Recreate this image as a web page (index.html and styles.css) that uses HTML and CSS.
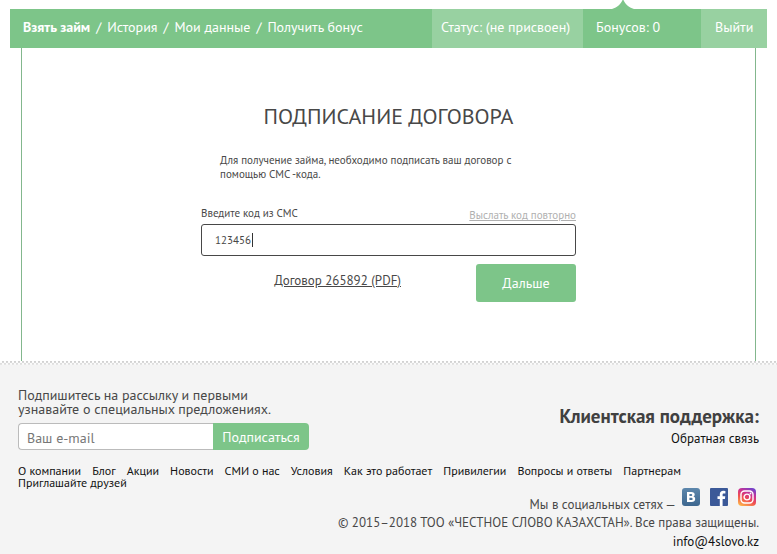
FILE: index.html
```html
<!DOCTYPE html>
<html lang="ru">
<head>
<meta charset="utf-8">
<meta name="viewport" content="width=device-width, initial-scale=1">
<title>Подписание договора</title>
<link rel="stylesheet" href="styles.css">
</head>
<body>
<header class="topbar">
  <nav class="topnav" aria-label="Личный кабинет">
    <a class="active" href="#">Взять займ</a><span>/</span><a href="#">История</a><span>/</span><a href="#">Мои данные</a><span>/</span><a href="#">Получить бонус</a>
  </nav>
  <div class="cell status">Статус: (не присвоен)</div>
  <div class="cell bonus">Бонусов: 0
    <svg class="pointer" viewBox="0 0 22 10" aria-hidden="true"><path d="M0 10C6 8 9 5 11 0C13 5 16 8 22 10Z" fill="#7dc589"/></svg>
  </div>
  <a class="cell logout" href="#">Выйти</a>
</header>
<main class="frame">
  <h1>ПОДПИСАНИЕ ДОГОВОРА</h1>
  <form class="sign">
    <p class="intro">Для получение займа, необходимо подписать ваш договор с помощью СМС -кода.</p>
    <div class="labels">
      <label for="code">Введите код из СМС</label>
      <a class="resend" href="#">Выслать код повторно</a>
    </div>
    <div class="codebox">
      <input id="code" class="code" type="text" value="123456">
      <span class="caret" aria-hidden="true"></span>
    </div>
    <div class="actions">
      <a class="contract" href="#">Договор 265892 (PDF)</a>
      <button class="next" type="button">Дальше</button>
    </div>
  </form>
</main>
<footer class="footer">
  <div class="footer-top">
    <form class="subscribe">
      <label for="email">Подпишитесь на рассылку и первыми<br>узнавайте о специальных предложениях.</label>
      <div class="subscribe-row">
        <input id="email" type="email" placeholder="Ваш e-mail">
        <button type="button">Подписаться</button>
      </div>
    </form>
    <div class="support">
      <h2>Клиентская поддержка:</h2>
      <a href="#">Обратная связь</a>
    </div>
  </div>
  <nav class="links" aria-label="Разделы сайта">
    <a href="#">О компании</a><a href="#">Блог</a><a href="#">Акции</a><a href="#">Новости</a><a href="#">СМИ о нас</a><a href="#">Условия</a><a href="#">Как это работает</a><a href="#">Привилегии</a><a href="#">Вопросы и ответы</a><a href="#">Партнерам</a><a href="#">Приглашайте друзей</a>
  </nav>
  <div class="social">
    <span>Мы в социальных сетях —</span>
    <a href="#" aria-label="ВКонтакте"><svg viewBox="0 0 18 18"><defs><linearGradient id="vk" x2="0" y2="1"><stop stop-color="#5d87ac"/><stop offset="1" stop-color="#3d678f"/></linearGradient></defs><rect width="18" height="18" rx="3" fill="url(#vk)"/><path fill="#fff" fill-rule="evenodd" d="M5 4H9.400C11.500 4 12.700 4.900 12.700 6.500C12.700 7.500 12.200 8.200 11.300 8.600C12.500 8.900 13.200 9.700 13.200 11C13.200 12.900 11.800 14 9.500 14H5ZM7.400 5.900V7.900H8.900C9.800 7.900 10.200 7.500 10.200 6.900C10.200 6.200 9.800 5.900 8.900 5.900ZM7.400 9.700V12.100H9.100C10.100 12.100 10.600 11.700 10.600 10.900C10.600 10.100 10.100 9.700 9.100 9.700Z"/></svg></a>
    <a href="#" aria-label="Facebook"><svg viewBox="0 0 18 18"><rect width="18" height="18" rx="1" fill="#3b5998"/><path fill="#fff" d="M9.800 18V11H7.500V8.300H9.800V6.300C9.800 4 11.200 2.800 13.300 2.800L15.400 2.900V5.400H13.900C12.800 5.400 12.600 5.900 12.600 6.700V8.300H15.300L14.900 11H12.600V18Z"/></svg></a>
    <a href="#" aria-label="Instagram"><svg viewBox="0 0 18 18"><defs><linearGradient id="ig" x1=".2" y1="1" x2=".7" y2="0"><stop stop-color="#fdb34b"/><stop offset=".4" stop-color="#f0504f"/><stop offset=".7" stop-color="#cb3192"/><stop offset="1" stop-color="#7642c8"/></linearGradient></defs><rect width="18" height="18" rx="4" fill="url(#ig)"/><g fill="none" stroke="#fff" stroke-width="1.400"><rect x="3" y="3" width="12" height="12" rx="3.500"/><circle cx="9" cy="9" r="2.900"/></g><circle cx="12.500" cy="5.500" r=".9" fill="#fff"/></svg></a>
  </div>
  <p class="copyright">© 2015–2018 ТОО «ЧЕСТНОЕ СЛОВО КАЗАХСТАН». Все права защищены.</p>
  <a class="mail" href="#">info@4slovo.kz</a>
</footer>
</body>
</html>
```
FILE: styles.css
```css
* {
  box-sizing: border-box;
}

body {
  margin: 0;
  min-height: 100vh;
  display: flex;
  flex-direction: column;
  background: #fff;
  color: #484848;
  font: 13px/14px "PT Sans", "Noto Sans", sans-serif;
}

a {
  color: inherit;
  text-decoration: none;
}

h1, h2, p {
  margin: 0;
  font-weight: normal;
}

input, button {
  font-family: inherit;
}

.topbar {
  display: flex;
  margin: 9px 10px 0;
  background: #7dc589;
  color: #fff;
  font-size: 14px;
  line-height: 36px;
}

.topnav {
  flex: 1;
  display: flex;
  gap: 6px;
  padding: 0 13px 3px;
  white-space: nowrap;
}

.active {
  font-weight: bold;
}

.cell {
  flex: none;
  padding-bottom: 3px;
  white-space: nowrap;
}

.status {
  width: 151px;
  padding-left: 9px;
  background: #98d1a1;
}

.bonus {
  position: relative;
  width: 118px;
  padding-left: 13px;
}

.pointer {
  position: absolute;
  left: 29px;
  bottom: 100%;
  width: 22px;
  height: 10px;
}

.logout {
  width: 66px;
  padding-left: 14px;
  background: #98d1a1;
}

.frame {
  margin: 0 21px;
  padding: 54px 20px 59px;
  border: solid #83b78d;
  border-width: 0 1px;
}

h1 {
  font-size: 22px;
  line-height: 28px;
  text-align: center;
}

.sign {
  max-width: 375px;
  margin: 23px auto 0;
}

.intro {
  padding: 0 39px 0 19px;
  font-size: 11px;
}

.labels {
  display: flex;
  justify-content: space-between;
  margin: 25px 0 2px;
  font-size: 11px;
}

.resend {
  padding-top: 2px;
  color: #b0b0b0;
  text-decoration: underline;
}

.codebox {
  position: relative;
}

.code {
  display: block;
  width: 100%;
  height: 32px;
  padding: 0 13px;
  border: 1px solid #484848;
  border-radius: 3px;
  color: #484848;
  font-size: 11px;
}

.caret {
  position: absolute;
  left: 51px;
  top: 9px;
  width: 1px;
  height: 14px;
  background: #333;
}

.actions {
  display: flex;
  justify-content: flex-end;
  margin-top: 8px;
}

.contract {
  margin: 10px 75px 0 0;
  text-decoration: underline;
}

.next {
  width: 100px;
  height: 38px;
  border: 0;
  border-radius: 3px;
  background: #7dc589;
  color: #fff;
  font-size: 14px;
  font-weight: 500;
}

/* The top edge is a thin woven strip that fades into the footer. */
.footer {
  flex: 1;
  padding: 27px 18px 0;
  background:
    linear-gradient(rgba(244, 244, 244, 0), #f4f4f4) 0 0 / 100% 6px no-repeat,
    repeating-conic-gradient(#cfcfcf 0 25%, #fff 0 50%) 0 0 / 4px 4px repeat-x,
    #f4f4f4;
}

.footer-top {
  display: flex;
  justify-content: space-between;
}

.subscribe {
  width: 291px;
  font-size: 14px;
}

.subscribe-row {
  display: flex;
  height: 27px;
  margin-top: 7px;
}

.subscribe-row input {
  flex: 1;
  min-width: 0;
  padding: 2px 8px 0;
  border: 1px solid #bbb;
  border-right: 0;
  border-radius: 4px 0 0 4px;
  background: #fff;
  font-size: 14px;
}

.subscribe-row input::placeholder {
  color: #777;
}

.subscribe-row button {
  width: 96px;
  padding: 0;
  border: 0;
  border-radius: 0 4px 4px 0;
  background: #7dc589;
  color: #fff;
  font-size: 14px;
  font-weight: 500;
}

.support {
  padding-top: 16px;
  text-align: right;
  color: #111;
}

.support h2 {
  margin-bottom: 4px;
  color: #404040;
  font-size: 19px;
  font-weight: bold;
  line-height: 24px;
}

.links {
  display: flex;
  flex-wrap: wrap;
  column-gap: 11px;
  margin: 15px 18px 0 0;
  color: #111;
  font-size: 12px;
  line-height: 12px;
}

.social {
  display: flex;
  justify-content: flex-end;
  margin: -1px 3px 0 0;
}

.social span {
  margin-right: 6px;
  padding-top: 10px;
}

.social a + a {
  margin-left: 10px;
}

.social svg {
  display: block;
  width: 18px;
  height: 18px;
}

.copyright {
  margin-top: 4px;
  text-align: right;
}

.mail {
  display: block;
  margin-top: 5px;
  color: #111;
  text-align: right;
}
```
